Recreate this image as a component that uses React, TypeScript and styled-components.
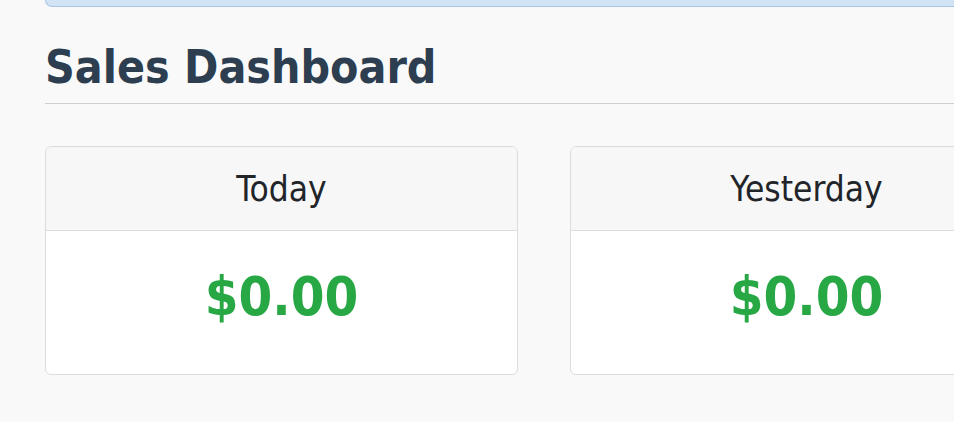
import React from "react";
import styled, { createGlobalStyle } from "styled-components";

const Global = createGlobalStyle`
  html, body { margin: 0; padding: 0; background: #f9f9f9; overflow: hidden; }
  body {
    font-family: "DejaVu Sans Condensed", "DejaVu Sans", Tahoma, sans-serif;
    font-stretch: condensed;
  }
`;

const Page = styled.div`
  width: 954px;
  height: 422px;
  overflow: hidden;
  padding-left: 45px;
  box-sizing: border-box;
`;

const Inner = styled.div`
  width: 1100px;
`;

const Alert = styled.div`
  height: 6px;
  background: #d2e3f5;
  border: 1px solid #a8c5e6;
  border-top: none;
  border-radius: 0 0 8px 8px;
`;

const Title = styled.h1`
  margin: 33px 0 0;
  font-size: 46px;
  line-height: 55px;
  font-weight: 700;
  color: #2c3e50;
  padding-bottom: 8px;
  border-bottom: 1px solid #d0d0d0;
`;

const Grid = styled.div`
  display: grid;
  grid-template-columns: 473px 473px 473px;
  column-gap: 52px;
  margin-top: 42px;
`;

const Card = styled.div`
  background: #fff;
  border: 1px solid #dcdcdc;
  border-radius: 6px;
  overflow: hidden;
  text-align: center;
`;

const CardHeader = styled.div`
  height: 83px;
  background: #f7f7f7;
  border-bottom: 1px solid #dcdcdc;
  display: flex;
  align-items: center;
  justify-content: center;
  font-size: 35px;
  color: #212529;
`;

const CardBody = styled.div`
  height: 143px;
  box-sizing: border-box;
  padding-bottom: 12px;
  display: flex;
  align-items: center;
  justify-content: center;
  font-size: 54px;
  font-weight: 700;
  color: #28a745;
`;

const cards = [
  { label: "Today", value: "$0.00" },
  { label: "Yesterday", value: "$0.00" },
];

export default function App() {
  return (
    <>
      <Global />
      <Page>
        <Inner>
          <Alert />
          <Title>Sales Dashboard</Title>
          <Grid>
            {cards.map((c) => (
              <Card key={c.label}>
                <CardHeader>{c.label}</CardHeader>
                <CardBody>{c.value}</CardBody>
              </Card>
            ))}
          </Grid>
        </Inner>
      </Page>
    </>
  );
}
